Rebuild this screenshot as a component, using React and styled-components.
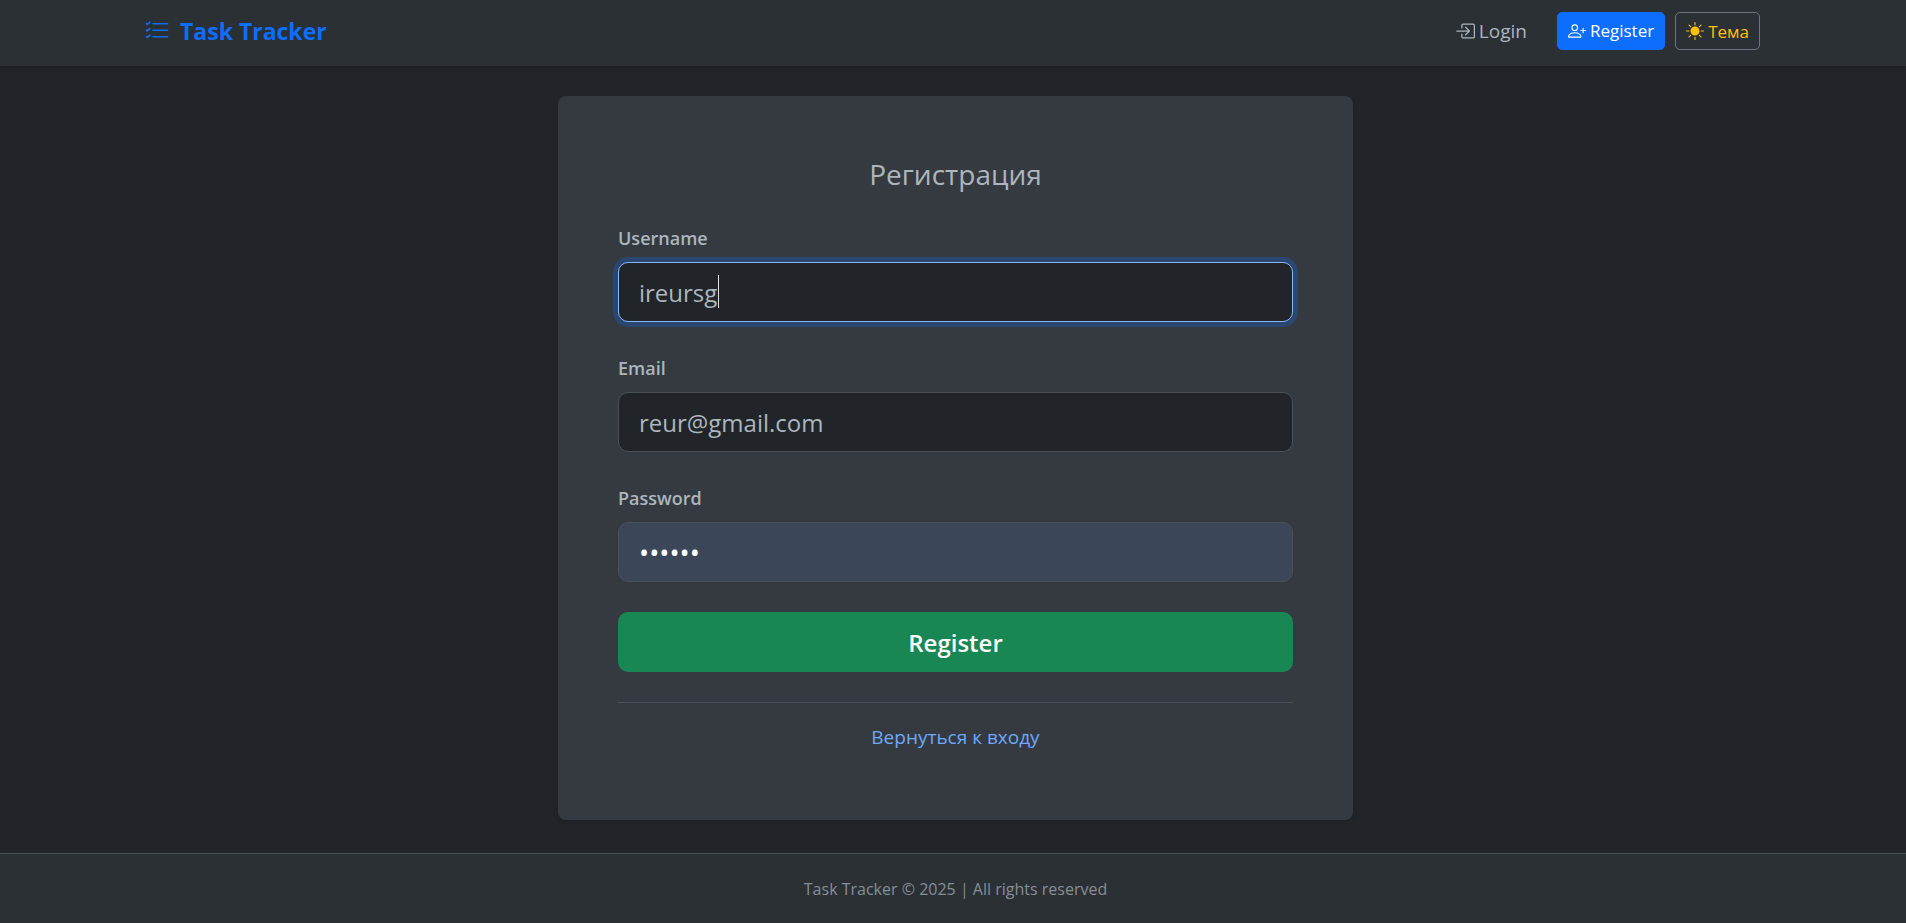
import React from 'react';
import styled, { createGlobalStyle, css } from 'styled-components';
import { BsListCheck, BsBoxArrowInRight, BsPersonPlus, BsSunFill } from 'react-icons/bs';

const GlobalStyle = createGlobalStyle`
  *, *::before, *::after { box-sizing: border-box; }
  body {
    margin: 0;
    background: #212529;
    color: #adb5bd;
    font-family: 'Open Sans', 'Noto Sans', sans-serif;
    font-size: 18px;
    line-height: 24px;
  }
  input, button { font-family: inherit; }
`;

const Page = styled.div`
  min-height: 100vh;
  display: flex;
  flex-direction: column;
`;

const Header = styled.header`
  display: flex;
  align-items: center;
  justify-content: space-between;
  padding: 12px 146px 16px 144px;
  background: #2b3035;
  box-shadow: 0 2px 4px rgba(0, 0, 0, 0.12);
`;

const Brand = styled.a`
  display: flex;
  align-items: center;
  gap: 10px;
  color: #0d6efd;
  font-size: 23px;
  font-weight: 700;
  line-height: 38px;
  text-decoration: none;
`;

const Nav = styled.nav`
  display: flex;
  align-items: center;
  gap: 10px;
`;

const NavLink = styled.a`
  display: flex;
  align-items: center;
  gap: 4px;
  margin-right: 20px;
  color: #adb5bd;
  font-size: 19px;
  text-decoration: none;
`;

const smallButton = css`
  display: flex;
  align-items: center;
  gap: 4px;
  height: 38px;
  padding: 0 10px;
  border: 1px solid;
  border-radius: 5px;
  font-size: 17px;
  text-decoration: none;
  white-space: nowrap;
`;

const RegisterLink = styled.a`
  ${smallButton}
  color: #fff;
  background: #0d6efd;
  border-color: #0d6efd;
`;

const ThemeButton = styled.button`
  ${smallButton}
  color: #ffc107;
  background: transparent;
  border-color: #6c757d;
`;

const Main = styled.main`
  flex: 1;
  display: flex;
  justify-content: center;
  align-items: flex-start;
  padding: 30px 0 33px 5px;
`;

const Card = styled.section`
  width: 100%;
  max-width: 795px;
  padding: 60px 60px 67px;
  border-radius: 8px;
  background: #343a40;
  box-shadow: 0 2px 5px rgba(0, 0, 0, 0.12);
`;

const Title = styled.h1`
  margin: 0 0 30px;
  font-size: 28px;
  font-weight: 400;
  line-height: 36px;
  text-align: center;
`;

const Field = styled.div`
  display: flex;
  flex-direction: column;
  gap: 8px;
  margin-bottom: 30px;
`;

const Label = styled.label`
  font-size: 18px;
  font-weight: 600;
  line-height: 32px;
`;

const InputWrap = styled.div`
  position: relative;
`;

const Caret = styled.span`
  position: absolute;
  top: 13px;
  left: 100px;
  width: 1px;
  height: 33px;
  background: #dee2e6;
  pointer-events: none;
`;

const Input = styled.input`
  display: block;
  width: 100%;
  height: 60px;
  padding: 0 20px;
  border: 1px solid ${(p) => (p.$active ? '#86b7fe' : '#495057')};
  border-radius: 10px;
  outline: none;
  background: ${(p) => (p.$autofilled ? '#3b4659' : '#212529')};
  box-shadow: ${(p) => (p.$active ? '0 0 0 5px rgba(13, 110, 253, 0.25)' : 'none')};
  color: ${(p) => (p.$autofilled ? '#fff' : '#adb5bd')};
  caret-color: ${(p) => (p.$active ? 'transparent' : 'auto')};
  font-size: ${(p) => (p.type === 'password' ? '27px' : '24px')};
`;

const SubmitButton = styled.button`
  display: block;
  width: 100%;
  height: 60px;
  border: 0;
  border-radius: 10px;
  background: #198754;
  color: #fff;
  font-size: 24px;
  font-weight: 600;
`;

const Divider = styled.hr`
  margin: 30px 0 18px;
  border: 0;
  border-top: 1px solid #495057;
`;

const BackRow = styled.p`
  margin: 0;
  text-align: center;
  line-height: 32px;
`;

const BackLink = styled.a`
  color: #6ea8fe;
  font-size: 19px;
  text-decoration: none;
`;

const Footer = styled.footer`
  padding: 20px 0 18px 5px;
  border-top: 1px solid #495057;
  background: #2b3035;
  color: #868e96;
  font-size: 16px;
  line-height: 31px;
  text-align: center;
`;

export default function App() {
  return (
    <Page>
      <GlobalStyle />
      <Header>
        <Brand href="#">
          <BsListCheck size={26} aria-hidden="true" />
          Task Tracker
        </Brand>
        <Nav>
          <NavLink href="#login">
            <BsBoxArrowInRight size={20} aria-hidden="true" />
            Login
          </NavLink>
          <RegisterLink href="#register">
            <BsPersonPlus size={18} aria-hidden="true" />
            Register
          </RegisterLink>
          <ThemeButton type="button">
            <BsSunFill size={18} aria-hidden="true" />
            Тема
          </ThemeButton>
        </Nav>
      </Header>
      <Main>
        <Card>
          <Title>Регистрация</Title>
          <form onSubmit={(e) => e.preventDefault()}>
            <Field>
              <Label htmlFor="username">Username</Label>
              <InputWrap>
                <Input id="username" type="text" defaultValue="ireursg" $active />
                <Caret aria-hidden="true" />
              </InputWrap>
            </Field>
            <Field>
              <Label htmlFor="email">Email</Label>
              <Input id="email" type="email" defaultValue="reur@gmail.com" />
            </Field>
            <Field>
              <Label htmlFor="password">Password</Label>
              <Input id="password" type="password" defaultValue="secret" $autofilled />
            </Field>
            <SubmitButton type="submit">Register</SubmitButton>
          </form>
          <Divider />
          <BackRow>
            <BackLink href="#login">Вернуться к входу</BackLink>
          </BackRow>
        </Card>
      </Main>
      <Footer>Task Tracker © 2025 | All rights reserved</Footer>
    </Page>
  );
}
